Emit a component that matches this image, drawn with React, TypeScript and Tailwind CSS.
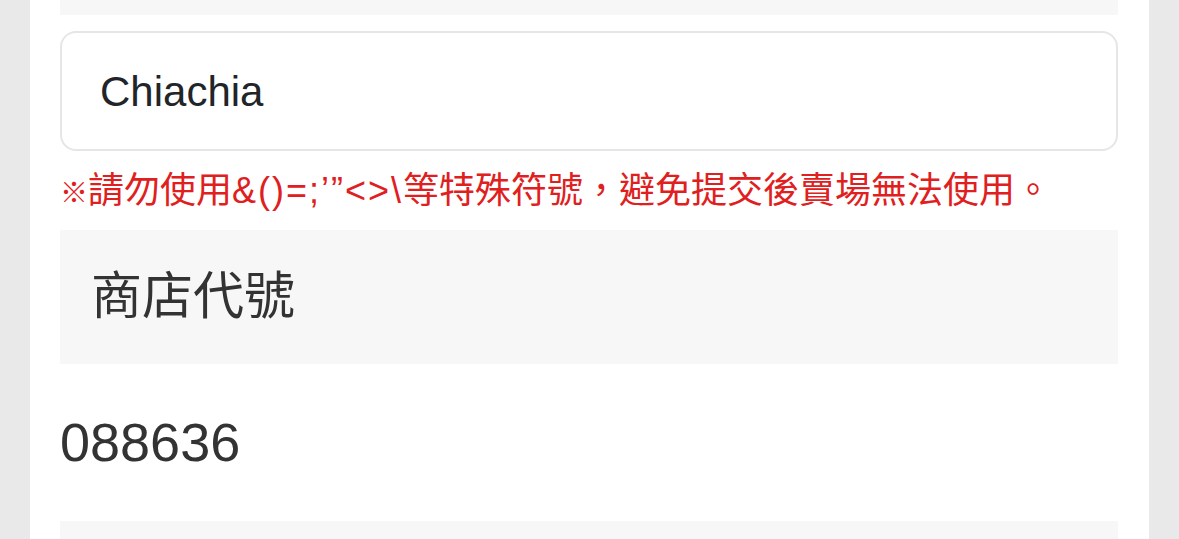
export default function App() {
  return (
    <div className="min-h-[539px] bg-[#e9e9e9] pl-[30px] pr-[30px]" style={{ fontFamily: '"Liberation Sans", "Noto Sans CJK TC", sans-serif' }}>
      <div className="bg-white px-[30px] pr-[31px] h-[539px] overflow-hidden">
        <div className="h-[15px] bg-[#f7f7f7]"></div>

        <div className="mt-[16px] h-[120px] rounded-[16px] border-2 border-[#e6e6e6] flex items-center pl-[38px]">
          <span className="text-[42px] text-[#212529]">Chiachia</span>
        </div>

        <p className="mt-[16px] mb-[15px] h-[48px] leading-[48px] text-[36px] text-[#e02020] whitespace-nowrap">
          <span className="text-[28px]">※</span>請勿使用<span className="tracking-[2px]">&amp;()=;’”&lt;&gt;\</span>等特殊符號，避免提交後賣場無法使用。
        </p>

        <div className="h-[134px] bg-[#f7f7f7] flex items-center pl-[31px]">
          <span className="text-[51px] text-[#333333]">商店代號</span>
        </div>

        <div className="h-[157px] flex items-center">
          <span className="text-[54px] text-[#333333]">088636</span>
        </div>

        <div className="h-[40px] bg-[#f7f7f7]"></div>
      </div>
    </div>
  );
}
